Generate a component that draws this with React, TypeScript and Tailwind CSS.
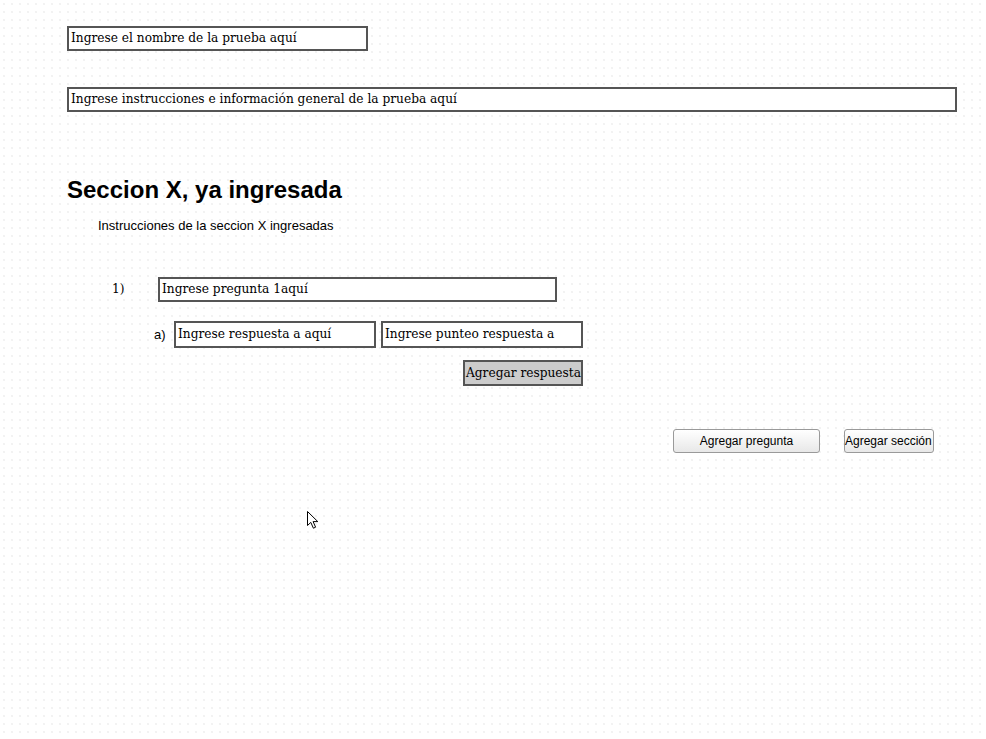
import React from "react";

// Wireframe mockup: test editor with one section already entered

const serif = "font-['DejaVu_Serif',serif]";
const sans = "font-['Liberation_Sans',Arial,sans-serif]";

function Field({ text, className = "" }: { text: string; className?: string }) {
  return (
    <div
      className={`flex h-[25px] items-center border-2 border-[#555555] bg-white px-[2px] text-[12.2px] text-black ${serif} ${className}`}
    >
      <span className="whitespace-nowrap">{text}</span>
    </div>
  );
}

function Cursor() {
  return (
    <svg
      className="pointer-events-none absolute left-[306px] top-[510px]"
      width="14"
      height="20"
      viewBox="0 0 14 20"
    >
      <path
        d="M1.5 1.5 L1.5 15.5 L4.8 12.4 L7.4 18.2 L9.6 17.2 L7.1 11.6 L11.8 11.6 Z"
        fill="white"
        stroke="black"
        strokeWidth="1"
        strokeLinejoin="miter"
      />
    </svg>
  );
}

export default function App() {
  return (
    <div className="relative min-h-[739px] w-full bg-white bg-[radial-gradient(circle,#e4e4e4_0.55px,transparent_0.85px)] bg-[size:8px_8px] bg-[position:0px_0px] pl-[67px] pt-[26px]">
      {/* Test header */}
      <Field text="Ingrese el nombre de la prueba aquí" className="w-[301px]" />
      <Field
        text="Ingrese instrucciones e información general de la prueba aquí"
        className="mt-[36px] w-[890px]"
      />

      {/* Section already entered */}
      <h1 className={`mt-[64px] text-[24px] font-bold leading-[28px] text-black ${sans}`}>
        Seccion X, ya ingresada
      </h1>
      <p className={`ml-[31px] mt-[14px] text-[13px] leading-[16px] text-black ${sans}`}>
        Instrucciones de la seccion X ingresadas
      </p>

      {/* Question 1 */}
      <div className="mt-[43px] flex items-center">
        <span className={`ml-[45px] w-[46px] text-[12.2px] text-black ${serif}`}>1)</span>
        <Field text="Ingrese pregunta 1aquí" className="w-[399px]" />
      </div>

      <div className="mt-[19px] flex items-center">
        <span className={`ml-[87px] w-[20px] text-[13px] text-black ${sans}`}>a)</span>
        <Field text="Ingrese respuesta a aquí" className="h-[27px] w-[202px]" />
        <Field text="Ingrese punteo respuesta a" className="ml-[5px] h-[27px] w-[202px]" />
      </div>

      <div className="mt-[12px] flex w-[516px] justify-end">
        <button
          className={`h-[26px] w-[120px] whitespace-nowrap border-2 border-[#555555] bg-[#cccccc] px-0 pl-[1px] text-left text-[12.2px] text-black ${serif}`}
        >
          Agregar respuesta
        </button>
      </div>

      {/* Actions */}
      <div className={`mt-[43px] flex text-[12px] text-black ${sans}`}>
        <button className="ml-[606px] h-[24px] w-[147px] rounded-[3px] border border-[#9a9a9a] bg-gradient-to-b from-white to-[#e8e8e8]">
          Agregar pregunta
        </button>
        <button className="ml-[24px] h-[24px] w-[90px] overflow-visible whitespace-nowrap rounded-[3px] border border-[#9a9a9a] bg-gradient-to-b from-white to-[#e8e8e8] px-0 text-left">
          Agregar sección
        </button>
      </div>

      <Cursor />
    </div>
  );
}
